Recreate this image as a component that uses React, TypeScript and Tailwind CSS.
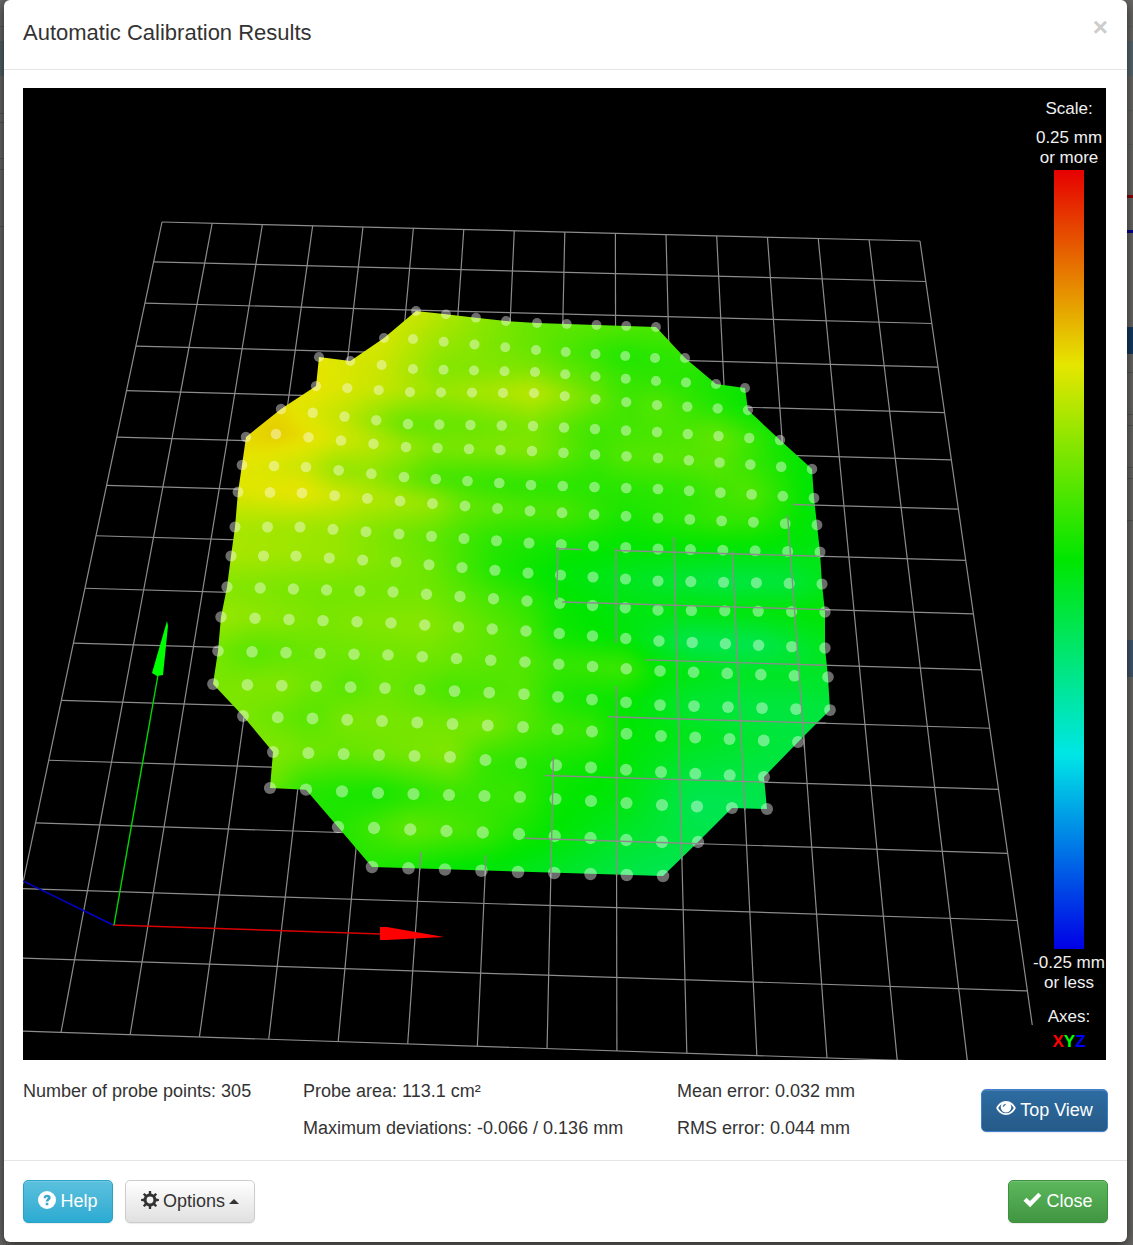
import { ReactNode } from "react";

type Pt = [number, number];

/* ── Bed grid: a 15x15 square seen in perspective ── */

const CELLS = 15;
const TL: Pt = [162, 222];
const TR: Pt = [920, 241];
const BL: Pt = [-8, 1030];
const BR: Pt = [1038, 1065];

// Maps the unit square onto the four corners above
function project(u: number, v: number): Pt {
  const dx1 = TR[0] - BR[0];
  const dx2 = BL[0] - BR[0];
  const dx3 = TL[0] - TR[0] + BR[0] - BL[0];
  const dy1 = TR[1] - BR[1];
  const dy2 = BL[1] - BR[1];
  const dy3 = TL[1] - TR[1] + BR[1] - BL[1];
  const den = dx1 * dy2 - dx2 * dy1;
  const g = (dx3 * dy2 - dx2 * dy3) / den;
  const h = (dx1 * dy3 - dx3 * dy1) / den;
  const w = g * u + h * v + 1;
  return [
    ((TR[0] - TL[0] + g * TR[0]) * u + (BL[0] - TL[0] + h * BL[0]) * v + TL[0]) / w,
    ((TR[1] - TL[1] + g * TR[1]) * u + (BL[1] - TL[1] + h * BL[1]) * v + TL[1]) / w,
  ];
}

const rowLine = (k: number): [Pt, Pt] => [project(0, k / CELLS), project(1, k / CELLS)];
const colLine = (k: number): [Pt, Pt] => [project(k / CELLS, 0), project(k / CELLS, 1)];
const lineIndexes = Array.from({ length: CELLS + 1 }, (_, i) => i);

// Parts of the grid that lie above the surface: [line, from, to]
const rowsAbove = [
  [6, 793, 815],
  [7, 557, 582],
  [7, 616, 820],
  [8, 562, 825],
  [9, 645, 825],
  [10, 608, 826],
  [11, 545, 768],
  [12, 525, 700],
];
const colsAbove = [
  [6, 852, 870],
  [7, 855, 870],
  [8, 547, 600],
  [8, 757, 874],
  [9, 548, 643],
  [9, 686, 876],
  [10, 537, 860],
  [11, 551, 810],
  [12, 515, 748],
];

/* ── Probe points: [column, x, y] along each row ── */

const probeRows: number[][][] = [
  [[5, 416, 311], [8, 506, 321], [9, 537, 323], [13, 656, 327]],
  [[4, 384, 338], [5, 413, 339], [9, 536, 350], [13, 655, 358], [14, 685, 358]],
  [[2, 319, 357], [5, 413, 369], [9, 535, 372], [13, 656, 381], [15, 716, 384], [16, 745, 388]],
  [[2, 316, 386], [5, 410, 392], [9, 534, 393], [13, 657, 405], [16, 748, 410]],
  [[1, 281, 409], [5, 408, 424], [9, 533, 426], [13, 657, 432], [17, 780, 440]],
  [[0, 246, 437], [1, 276, 434], [5, 406, 447], [9, 532, 451], [13, 658, 458], [18, 812, 469]],
  [[0, 242, 465], [2, 306, 467], [5, 404, 477], [9, 531, 485], [13, 658, 489], [18, 814, 498]],
  [[0, 238, 492], [2, 302, 493], [5, 400, 501], [9, 530, 511], [13, 658, 518], [18, 817, 525]],
  [[0, 235, 527], [2, 300, 527], [5, 399, 534], [9, 529, 543], [13, 658, 549], [18, 820, 552]],
  [[0, 231, 556], [2, 296, 556], [5, 396, 562], [9, 528, 573], [13, 658, 581], [18, 822, 584]],
  [[0, 227, 587], [5, 393, 592], [9, 527, 601], [13, 658, 610], [18, 825, 612]],
  [[0, 221, 617], [5, 391, 623], [9, 526, 631], [13, 659, 641], [18, 825, 648]],
  [[0, 218, 651], [5, 388, 655], [9, 525, 662], [13, 660, 671], [18, 828, 677]],
  [[0, 213, 684], [5, 385, 688], [9, 524, 694], [13, 660, 705], [18, 830, 710]],
  [[1, 243, 716], [5, 382, 721], [9, 523, 727], [13, 661, 736], [17, 798, 742]],
  [[2, 273, 752], [5, 379, 755], [7, 450, 757], [9, 521, 763], [13, 661, 772], [16, 764, 777]],
  [[2, 270, 788], [5, 378, 793], [9, 520, 797], [13, 662, 805], [15, 732, 808], [16, 767, 809]],
  [[4, 338, 827], [5, 374, 828], [9, 519, 834], [13, 662, 842], [14, 698, 842]],
  [[5, 372, 867], [9, 518, 872], [13, 663, 876]],
];

// Surface hue in degrees (60 yellow, 120 green, 140 teal): [column, hue]
const hueRows: number[][][] = [
  [[5, 66], [7, 82], [9, 94], [13, 100]],
  [[4, 64], [6, 80], [9, 94], [12, 112], [14, 108]],
  [[2, 60], [4, 67], [6, 86], [9, 86], [12, 106], [14, 110], [16, 118]],
  [[2, 59], [4, 68], [6, 80], [8, 74], [9, 70], [11, 92], [12, 104], [13, 98], [16, 118]],
  [[1, 57], [3, 70], [5, 95], [7, 93], [9, 88], [11, 104], [14, 100], [15, 94], [16, 104], [17, 116]],
  [[0, 57], [1, 53], [2, 58], [4, 72], [6, 88], [9, 86], [11, 104], [12, 98], [15, 97], [18, 122]],
  [[0, 60], [2, 68], [3, 82], [4, 82], [6, 102], [8, 108], [11, 110], [14, 108], [16, 99], [18, 122]],
  [[0, 62], [2, 58], [4, 72], [6, 80], [7, 94], [9, 100], [10, 100], [12, 114], [15, 106], [16, 108], [18, 124]],
  [[0, 76], [3, 80], [6, 95], [8, 110], [10, 116], [12, 120], [15, 122], [18, 124]],
  [[0, 76], [3, 80], [6, 92], [7, 102], [8, 112], [10, 122], [12, 128], [15, 138], [17, 136], [18, 128]],
  [[0, 86], [3, 90], [6, 90], [8, 102], [9, 108], [10, 118], [12, 124], [15, 122], [18, 120]],
  [[0, 80], [3, 88], [6, 84], [9, 102], [10, 116], [12, 122], [14, 141], [16, 141], [18, 128]],
  [[0, 90], [1, 98], [3, 92], [6, 90], [9, 99], [10, 106], [12, 104], [13, 120], [15, 128], [18, 130]],
  [[0, 88], [2, 86], [4, 98], [5, 92], [7, 102], [9, 98], [10, 112], [12, 120], [14, 134], [16, 137], [18, 136]],
  [[1, 88], [3, 98], [4, 88], [7, 90], [8, 88], [9, 98], [10, 104], [11, 106], [12, 120], [15, 130], [17, 137]],
  [[2, 86], [4, 94], [7, 86], [8, 106], [9, 110], [12, 122], [14, 136], [16, 138]],
  [[2, 92], [3, 110], [5, 116], [7, 106], [9, 106], [10, 118], [12, 124], [14, 142], [16, 140]],
  [[4, 112], [6, 94], [8, 104], [9, 114], [12, 132], [14, 138]],
  [[5, 112], [7, 120], [9, 126], [12, 138], [13, 142]],
];

// Linear interpolation along one row of samples, carried on past both ends
function sample(row: number[][], col: number, field: number) {
  let i = 0;
  while (i < row.length - 2 && col > row[i + 1][0]) i++;
  const [a, b] = [row[i], row[i + 1]];
  return a[field] + ((b[field] - a[field]) * (col - a[0])) / (b[0] - a[0]);
}

const probe = (r: number, c: number): Pt => [sample(probeRows[r], c, 1), sample(probeRows[r], c, 2)];

const hueAt = (r: number, c: number) => {
  const row = hueRows[r];
  return sample(row, Math.min(Math.max(c, row[0][0]), row[row.length - 1][0]), 1);
};

const mix = (a: number, b: number, t: number) => a + (b - a) * t;
const toPoints = (pts: Pt[]) => pts.map((p) => `${p[0].toFixed(1)},${p[1].toFixed(1)}`).join(" ");

const first = (r: number) => probeRows[r][0][0];
const last = (r: number) => probeRows[r][probeRows[r].length - 1][0];

const dots = probeRows.flatMap((_, r) =>
  Array.from({ length: last(r) - first(r) + 1 }, (_, i) => ({
    p: probe(r, first(r) + i),
    size: 4.9 + r * 0.075,
  }))
);

const outlineCells: Pt[] = [
  [0, 5], [0, 6], [0, 7], [0, 8], [0, 9], [0, 13], [1, 14], [2, 15], [2, 16], [3, 16], [4, 17],
  [5, 18], [6, 18], [7, 18], [8, 18], [9, 18], [10, 18], [11, 18], [12, 18], [13, 18],
  [14, 17], [15, 16], [16, 16], [16, 15], [17, 14], [18, 13],
  [18, 5], [17, 4], [16, 3], [16, 2], [15, 2], [14, 1],
  [13, 0], [12, 0], [11, 0], [10, 0], [9, 0], [8, 0], [7, 0], [6, 0], [5, 0],
  [4, 1], [3, 2], [2, 2], [2, 3], [1, 4],
];
const outline = toPoints(outlineCells.map(([r, c]) => probe(r, c)));

// Every cell is cut into SUB x SUB flat patches. The first and last rows run
// on past the outline so that the soft edge stays outside the clip.
const SUB = 4;
const patches: { points: string; fill: string }[] = [];
for (let r = 0; r < 18; r++) {
  const from = Math.min(first(r), first(r + 1)) - 1;
  const to = Math.max(last(r), last(r + 1)) + 1;
  const at = (s: number, c: number): Pt => {
    const a = probe(r, c);
    const b = probe(r + 1, c);
    return [mix(a[0], b[0], s), mix(a[1], b[1], s)];
  };
  for (let i = r === 0 ? -SUB : 0; i < (r === 17 ? 2 * SUB : SUB); i++) {
    for (let j = 0; j < (to - from) * SUB; j++) {
      const c0 = from + j / SUB;
      const c1 = c0 + 1 / SUB;
      const s0 = i / SUB;
      const s1 = s0 + 1 / SUB;
      const cm = (c0 + c1) / 2;
      const sm = Math.min(Math.max((s0 + s1) / 2, 0), 1);
      const hue = mix(hueAt(r, cm), hueAt(r + 1, cm), sm);
      patches.push({
        points: toPoints([at(s0, c0), at(s0, c1), at(s1, c1), at(s1, c0)]),
        fill: `hsl(${hue.toFixed(1)} 100% 45%)`,
      });
    }
  }
}

function HeightMap() {
  return (
    <svg viewBox="23 88 1083 972" className="block w-full bg-black" role="img" aria-label="Height map">
      <defs>
        <clipPath id="surface">
          <polygon points={outline} />
        </clipPath>
        <filter id="soften" x="-5%" y="-5%" width="110%" height="110%" colorInterpolationFilters="sRGB">
          <feGaussianBlur stdDeviation="4" />
        </filter>
      </defs>

      <g stroke="#8c8c8c" strokeWidth="1.2">
        {lineIndexes.flatMap((k) =>
          [rowLine(k), colLine(k)].map(([a, b], i) => (
            <line key={`${k}-${i}`} x1={a[0]} y1={a[1]} x2={b[0]} y2={b[1]} />
          ))
        )}
      </g>

      {/* The legend column hides the corner of the bed */}
      <rect x="1033" y="88" width="73" height="972" fill="#000" />
      <rect x="1028" y="1025" width="78" height="35" fill="#000" />

      {/* Axes */}
      <g strokeWidth="1.4">
        <line x1="23" y1="881" x2="113" y2="925" stroke="#0000c8" />
        <line x1="113" y1="925" x2="381" y2="934" stroke="#d80000" />
        <line x1="114" y1="925" x2="158" y2="675" stroke="#00d800" />
        <polygon points="380,927 387,927 444,937 387,940 380,940" fill="#f00" />
        <polygon points="167,621 168,626 163,675 157,676 152,673" fill="#0f0" />
      </g>

      <g clipPath="url(#surface)">
        <g filter="url(#soften)">
          {patches.map((p, i) => (
            <polygon key={i} points={p.points} fill={p.fill} stroke={p.fill} />
          ))}
        </g>
      </g>

      <g fill="#fff" fillOpacity="0.42">
        {dots.map((d, i) => (
          <circle key={i} cx={d.p[0]} cy={d.p[1]} r={d.size} />
        ))}
      </g>

      <g stroke="#8c8c8c" strokeWidth="1.4">
        {rowsAbove.map(([k, x0, x1], i) => {
          const [a, b] = rowLine(k);
          const y = (x: number) => mix(a[1], b[1], (x - a[0]) / (b[0] - a[0]));
          return <line key={`r${i}`} x1={x0} y1={y(x0)} x2={x1} y2={y(x1)} />;
        })}
        {colsAbove.map(([k, y0, y1], i) => {
          const [a, b] = colLine(k);
          const x = (y: number) => mix(a[0], b[0], (y - a[1]) / (b[1] - a[1]));
          return <line key={`c${i}`} x1={x(y0)} y1={y0} x2={x(y1)} y2={y1} />;
        })}
      </g>
    </svg>
  );
}

function Legend() {
  return (
    <div className="absolute inset-y-0 right-0 flex w-[74px] flex-col items-center whitespace-nowrap pt-[11px] text-center text-[17px] leading-5 text-[#f0f0f0]">
      <span>Scale:</span>
      <span className="mt-[9px]">
        0.25 mm
        <br />
        or more
      </span>
      <div className="mt-[2px] w-[30px] flex-1 bg-[linear-gradient(#e60000,#e6e600_25%,#00e600_50%,#00e6e6_75%,#0000e6)]" />
      <span className="mt-[4px]">
        -0.25 mm
        <br />
        or less
      </span>
      <span className="mt-[14px]">Axes:</span>
      <span className="mb-2 mt-[5px] font-bold">
        <span className="text-[#f00]">X</span>
        <span className="text-[#0f0]">Y</span>
        <span className="text-[#00f]">Z</span>
      </span>
    </div>
  );
}

/* ── Icons ── */

const HelpIcon = () => (
  <svg viewBox="0 0 18 18" className="mb-1 size-[18px]" aria-hidden="true">
    <circle cx="9" cy="9" r="9" fill="#fff" />
    <path d="M5.6 7.3C5.600 4.700 7 3.700 9.100 3.700s3.600 1.100 3.600 3c0 2.200-2.300 2.300-2.400 3.900H7.700c0-2.300 2.100-2.700 2.100-3.800 0-.6-.3-.9-.8-.9-.6 0-.9.5-.9 1.400zM7.700 11.700h2.600v2.500H7.700z" fill="#3ba9cd" />
  </svg>
);

const CogIcon = () => (
  <svg viewBox="0 0 18 18" className="mb-1 size-[18px]" aria-hidden="true" fill="#333">
    <path fillRule="evenodd" d="M9 2.600a6.400 6.400 0 1 0 0 12.800A6.400 6.400 0 0 0 9 2.600zm0 3a3.400 3.400 0 1 1 0 6.800 3.400 3.400 0 0 1 0-6.800z" />
    {[0, 45, 90, 135, 180, 225, 270, 315].map((a) => (
      <path key={a} d="M7.600 3.400L7.900.1h2.200l.3 3.300z" transform={`rotate(${a} 9 9)`} />
    ))}
  </svg>
);

const EyeIcon = () => (
  <svg viewBox="0 0 20 16" className="mb-1 h-4 w-5" aria-hidden="true">
    <path fill="#fff" fillRule="evenodd" d="M10 1C5.600 1 2 4 .2 8 2 12 5.600 15 10 15s8-3 9.800-7C18 4 14.400 1 10 1zm0 12.300C6.600 13.300 3.800 11 2.200 8 3 6.500 4.200 5.100 5.600 4.200 5 5.200 4.700 6.200 4.700 7.300a5.300 5.300 0 0 0 10.600 0c0-1.100-.3-2.100-.9-3.100C15.800 5.100 17 6.500 17.800 8c-1.600 3-4.400 5.300-7.800 5.300z" />
    <path fill="none" stroke="#285e8e" strokeWidth="1.300" d="M7.300 6.700c.3-1.300 1.100-2.100 2.300-2.300" />
  </svg>
);

const CheckIcon = () => (
  <svg viewBox="0 0 19 16" className="mb-1 h-4 w-[19px]" aria-hidden="true">
    <path d="M.5 8.800L3.600 5.700 7 9.100 15.300.700l3.100 2.900L7.100 15.300z" fill="#fff" />
  </svg>
);

function Button({ className, children }: { className: string; children: ReactNode }) {
  return (
    <button
      type="button"
      className={`flex h-[43px] items-center justify-center gap-1 whitespace-nowrap rounded-[5px] border shadow-[inset_0_1px_0_rgba(255,255,255,0.15),0_1px_1px_rgba(0,0,0,0.08)] ${className}`}
    >
      {children}
    </button>
  );
}

/* ── Dimmed page that shows at both sides of the dialog ── */

function Backdrop() {
  return (
    <div className="absolute inset-0 flex justify-between bg-[#676664]" aria-hidden="true">
      <div className="w-2">
        <div className="mt-[26px] h-px bg-[#555]" />
        <div className="mt-[14px] h-[35px] bg-[#4f5f65]" />
        <div className="mt-[37px] h-[10px] border-y border-[#525252]" />
        <div className="mt-[35px] h-[12px] border-y border-[#525252]" />
        <div className="mt-[56px] h-px bg-[#525252]" />
      </div>
      <div className="w-2">
        <div className="mt-[26px] h-px bg-[#606060]" />
        <div className="mt-[14px] h-[35px] bg-[#55666d]" />
        <div className="mt-[34px] h-px bg-[#606060]" />
        <div className="mt-[33px] h-px bg-[#606060]" />
        <div className="mt-[50px] h-[3px] bg-[#8b0000]" />
        <div className="mt-[32px] h-[3px] bg-[#00008b]" />
        <div className="mt-[94px] h-[27px] bg-[#153a5e]" />
        <div className="mt-[18px] h-[43px] border-y border-[#555]" />
        <div className="mt-[10px] h-[43px] border-y border-[#555]" />
        <div className="mt-[10px] h-[43px] border-y border-[#555]" />
        <div className="mt-[119px] h-[37px] bg-[#41566a]" />
      </div>
    </div>
  );
}

export default function App() {
  return (
    <div className="relative bg-[#676664] pb-[3px] pl-1 pr-[6px] font-['Liberation_Sans',Arial,sans-serif] text-[18px] leading-[25px] text-[#333]">
      <Backdrop />
      <div
        role="dialog"
        aria-labelledby="dialog-title"
        className="relative rounded-md bg-white shadow-[0_3px_12px_rgba(0,0,0,0.6)]"
      >
        <header className="flex items-start justify-between border-b border-[#e5e5e5] px-[19px] pb-5 pt-4">
          <h4 id="dialog-title" className="text-[22px] leading-[33px]">
            Automatic Calibration Results
          </h4>
          <button type="button" aria-label="Close dialog" className="text-[26px] font-bold leading-[22px] text-[#ccc]">
            ×
          </button>
        </header>

        <div className="px-[19px] pb-[19px] pt-[18px]">
          <div className="relative mr-[2px]">
            <HeightMap />
            <Legend />
          </div>

          <div className="mt-[19px] grid grid-cols-[280fr_374fr_304fr_127px]">
            <p>Number of probe points: 305</p>
            <div className="flex flex-col gap-3">
              <p>Probe area: 113.1 cm²</p>
              <p>Maximum deviations: -0.066 / 0.136 mm</p>
            </div>
            <div className="flex flex-col gap-3">
              <p>Mean error: 0.032 mm</p>
              <p>RMS error: 0.044 mm</p>
            </div>
            <Button className="self-center border-[#3f7fd0] bg-linear-to-b from-[#2d6ca2] to-[#265a88] text-white">
              <EyeIcon />
              Top View
            </Button>
          </div>
        </div>

        <footer className="flex items-center gap-3 border-t border-[#e5e5e5] px-[19px] py-[19px]">
          <Button className="w-[90px] border-[#28a4c9] bg-linear-to-b from-[#5bc0de] to-[#2aabd2] text-white">
            <HelpIcon />
            Help
          </Button>
          <Button className="w-[130px] border-[#ccc] bg-linear-to-b from-white to-[#e0e0e0]">
            <CogIcon />
            Options
            <svg viewBox="0 0 10 5" className="h-[5px] w-[10px]" aria-hidden="true">
              <path d="M0 5l5-5 5 5z" fill="#333" />
            </svg>
          </Button>
          <Button className="ml-auto w-[100px] border-[#3e8f3e] bg-linear-to-b from-[#5cb85c] to-[#419641] text-white">
            <CheckIcon />
            Close
          </Button>
        </footer>
      </div>
    </div>
  );
}
